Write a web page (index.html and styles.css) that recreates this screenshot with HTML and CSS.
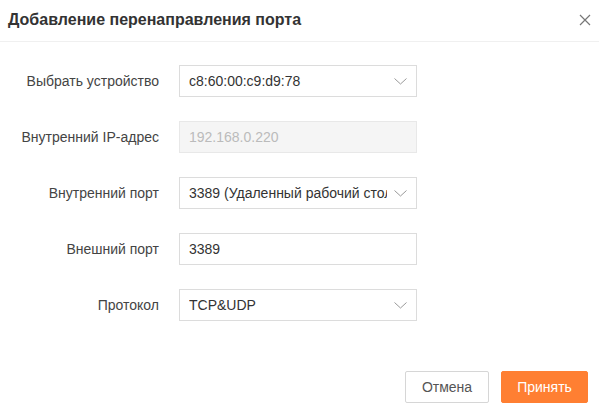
FILE: index.html
```html
<!DOCTYPE html>
<html lang="ru">
<head>
<meta charset="utf-8">
<link rel="stylesheet" href="styles.css">
</head>
<body>
<div class="dialog">
  <div class="header">
    <span class="title">Добавление перенаправления порта</span>
    <svg class="close" width="12" height="12" viewBox="0 0 12 12"><path d="M1 1L11 11M11 1L1 11" stroke="#777" stroke-width="1.2" fill="none"/></svg>
  </div>
  <div class="form">
    <div class="row">
      <label class="label">Выбрать устройство</label>
      <div class="field select"><span class="value">c8:60:00:c9:d9:78</span><svg class="chev" width="13" height="7" viewBox="0 0 13 7"><path d="M0.5 0.5L6.5 6L12.5 0.5" stroke="#999" stroke-width="1" fill="none"/></svg></div>
    </div>
    <div class="row">
      <label class="label">Внутренний IP-адрес</label>
      <div class="field disabled"><span class="value">192.168.0.220</span></div>
    </div>
    <div class="row">
      <label class="label">Внутренний порт</label>
      <div class="field select"><span class="value clip">3389 (Удаленный рабочий стол)</span><svg class="chev" width="13" height="7" viewBox="0 0 13 7"><path d="M0.5 0.5L6.5 6L12.5 0.5" stroke="#999" stroke-width="1" fill="none"/></svg></div>
    </div>
    <div class="row">
      <label class="label">Внешний порт</label>
      <div class="field"><span class="value">3389</span></div>
    </div>
    <div class="row">
      <label class="label">Протокол</label>
      <div class="field select"><span class="value">TCP&amp;UDP</span><svg class="chev" width="13" height="7" viewBox="0 0 13 7"><path d="M0.5 0.5L6.5 6L12.5 0.5" stroke="#999" stroke-width="1" fill="none"/></svg></div>
    </div>
  </div>
  <div class="footer">
    <button class="btn cancel">Отмена</button>
    <button class="btn ok">Принять</button>
  </div>
</div>
</body>
</html>
```
FILE: styles.css
```css
html, body {
  margin: 0;
  padding: 0;
  background: #fff;
}
body {
  font-family: "Liberation Sans", Arial, sans-serif;
  color: #333;
  width: 599px;
  height: 413px;
  overflow: hidden;
}
.header {
  height: 42px;
  border-bottom: 1px solid #f0f0f0;
  display: flex;
  align-items: center;
  justify-content: space-between;
  padding: 0 8px 0 8px;
  box-sizing: border-box;
}
.title {
  font-size: 16px;
  font-weight: bold;
  color: #333;
  margin-top: -1px;
}
.close {
  margin-right: 0;
  margin-top: -1px;
}
.form {
  padding-top: 23px;
  display: flex;
  flex-direction: column;
  gap: 24px;
}
.row {
  display: flex;
  align-items: center;
  gap: 20px;
}
.label {
  width: 159px;
  text-align: right;
  font-size: 14px;
  color: #444;
}
.field {
  width: 238px;
  height: 32px;
  box-sizing: border-box;
  border: 1px solid #dcdcdc;
  display: flex;
  align-items: center;
  padding: 0 9px;
  font-size: 14px;
  color: #333;
  gap: 7px;
}
.value {
  flex: 1;
  white-space: nowrap;
  overflow: hidden;
  text-overflow: clip;
}
.field.disabled {
  background: #f5f5f5;
  border-color: #e8e8e8;
  color: #bbb;
}
.chev {
  flex: none;
  margin-right: 0;
}
.footer {
  margin-top: 50px;
  display: flex;
  justify-content: flex-end;
  gap: 12px;
  padding-right: 11px;
}
.btn {
  height: 32px;
  font-family: "Liberation Sans", Arial, sans-serif;
  font-size: 14px;
  border-radius: 2px;
  cursor: pointer;
}
.cancel {
  width: 84px;
  background: #fff;
  border: 1px solid #d6d6d6;
  color: #555;
}
.ok {
  width: 87px;
  background: #ff7f32;
  border: 1px solid #ff7f32;
  color: #fff;
}
```
